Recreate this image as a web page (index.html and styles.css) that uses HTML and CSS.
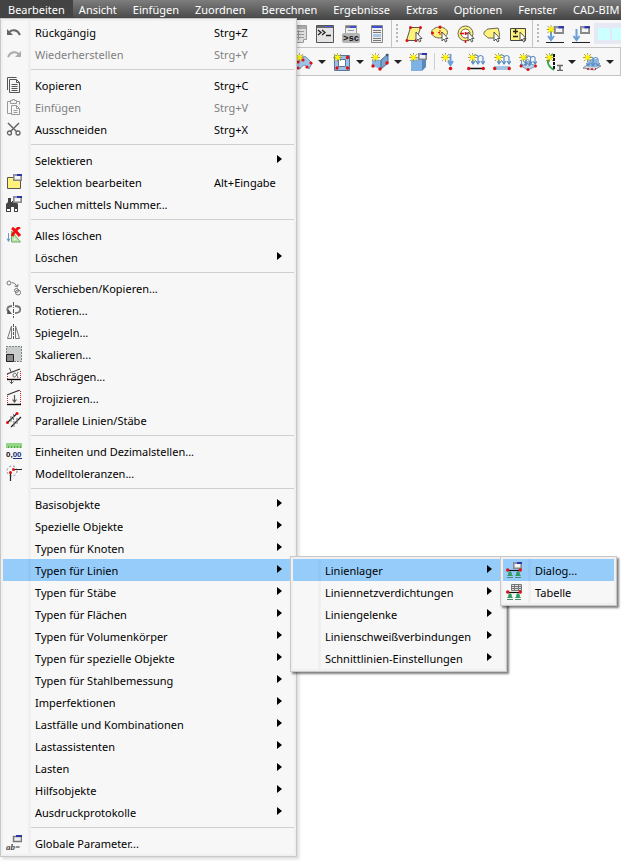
FILE: index.html
```
<!DOCTYPE html>
<html lang="de">
<head>
    <meta charset="UTF-8">
    <title>Bearbeiten</title>
    <link rel="stylesheet" href="styles.css">
</head>
<body>

<svg class="sprite" aria-hidden="true">
    <!-- small building blocks -->
    <symbol id="star" viewBox="0 0 10 10"><path d="M5 0v10M0 5h10M1 1l8 8M9 1l-8 8" stroke="#a3943a"/><path d="M5 1l1 2 3 0-2 2 1 3-3-1-3 1 1-3-2-2 3 0z" fill="#fff200"/></symbol>
    <symbol id="cursor" viewBox="0 0 8 12"><path d="M1 1v9l2-2 1.500 3 1.500-1-1.500-2.500H7z" fill="#fff" stroke="#555"/></symbol>
    <symbol id="win" viewBox="0 0 9 7"><path d="M.8.8h7.400v5.400H.8z" fill="#f4f4f4" stroke="#888" stroke-width="1.6"/><path d="M1 0h8v2H1z" fill="#8d93b8"/><path d="M4 0h5v2H4z" fill="#2a35a8"/></symbol>
    <symbol id="load" viewBox="0 0 14 12"><path d="M2 9V2q2-2 5 0v7M7 3q3-3 5 0v6M0 7l2 3 2-3M5 7l2 3 2-3M10 7l2 3 2-3" fill="none" stroke="#5b8fc4" stroke-width="1.2"/></symbol>

    <!-- menu icons -->
    <symbol id="undo" viewBox="0 0 16 16"><path d="M3.500 8C6 5.500 11 5 14 11" fill="none" stroke="#666" stroke-width="2"/><path d="M1 5v6h6z" fill="#666"/></symbol>
    <symbol id="redo" viewBox="0 0 16 16"><path d="M12.500 8C10 5.500 5 5 2 11" fill="none" stroke="#aaa" stroke-width="2"/><path d="M15 5v6H9z" fill="#aaa"/></symbol>
    <symbol id="copy" viewBox="0 0 16 16"><path d="M1.500 13V.5h9" fill="none" stroke="#555"/><path d="M3.500 2.500h7l3 3v10h-10zM10.500 2.500v3h3M5.500 7.500h6M5.500 9.500h6M5.500 11.500h6M5.500 13.500h6" fill="none" stroke="#555"/></symbol>
    <symbol id="paste" viewBox="0 0 16 16"><path d="M4.500 2.500h-3v12h4M10.500 2.500h3v3M4.500 1.500h2v-1h2v1h2v3h-6zM5.500 6.500h5l3 3v6h-8zM10.500 6.500v3h3M7.500 11.500h4M7.500 13.500h4" fill="none" stroke="#999"/></symbol>
    <symbol id="cut" viewBox="0 0 16 16"><path d="M2 2l9 9M13 2l-9 9" stroke="#666" stroke-width="1.5"/><circle cx="3.5" cy="12" r="2" fill="none" stroke="#666" stroke-width="1.3"/><circle cx="12" cy="12" r="2" fill="none" stroke="#666" stroke-width="1.3"/></symbol>
    <symbol id="selection" viewBox="0 0 16 16"><path d="M1.500 3.500h13v11h-13z" fill="#fff27a" stroke="#555"/><use href="#win" x="7" y="0" width="9" height="7"/></symbol>
    <symbol id="find" viewBox="0 0 16 16"><path d="M2 2h3v4h1V5h2V2h3v5l1 1v8H8v-5H5v5H0V8l2-2z" fill="#444"/><path d="M1 13h3v2H1zM9 13h2v2H9z" fill="#fff"/><use href="#win" x="7" y="0" width="9" height="7"/></symbol>
    <symbol id="delete-all" viewBox="0 0 16 16"><path d="M2.500 6v8M1 11.500l1.500 3 1.500-3" fill="none" stroke="#6a9acc"/><path d="M5.500 4v11h9z" fill="#b9e8a8" stroke="#79a96d"/><path d="M8 11v2h2z" fill="#f7f7f7"/><path d="M6 1c3 2 5 4 8 8M14 0C10 2 8 5 6 9" stroke="#f01010" stroke-width="3" fill="none"/></symbol>
    <symbol id="move" viewBox="0 0 16 16"><g fill="none" stroke="#777"><circle cx="3" cy="3" r="2"/><circle cx="10.5" cy="10.5" r="2"/><circle cx="12" cy="12.5" r="2.5"/><path d="M6 2.500q3 0 5 4M8.500 6l3 1 .5-3"/></g></symbol>
    <symbol id="rotate" viewBox="0 0 16 16"><path d="M7.500 0v16" stroke="#555" stroke-dasharray="4 1 1 1"/><path d="M6 4C1 4 0 8 3 10M9 4c7 0 7 7 0 7" fill="none" stroke="#777" stroke-width="1.8"/><path d="M1 12l1-5 4 5z" fill="#555"/></symbol>
    <symbol id="mirror" viewBox="0 0 16 16"><path d="M7.500 0v16" stroke="#555" stroke-dasharray="3 1"/><path d="M5.500 2v12.500h-4zM9.500 2v12.500h4z" fill="none" stroke="#777"/></symbol>
    <symbol id="scale" viewBox="0 0 16 16"><path d="M.5.5h15v15H.5z" fill="#c9cdcc" stroke="#222" stroke-dasharray="1 2"/><path d="M.5 8.500h7v7h-7z" fill="#8a8a8a" stroke="#222"/></symbol>
    <symbol id="shear" viewBox="0 0 16 16"><path d="M1 6l13-5" stroke="#333" stroke-width="1.2"/><path d="M1 11.500h14" stroke="#111" stroke-width="1.4"/><path d="M1.500 6v5M14.500 3v8" stroke="#e02020" stroke-dasharray="1 1"/><path d="M3.500 0l2 5M5.500 12v4M3.500 13.500l2 2 2-2M12 4c-2 6-5 6-5 3.500S10 3 12 10" fill="none" stroke="#555"/></symbol>
    <symbol id="project" viewBox="0 0 16 16"><path d="M1 5l13-5" stroke="#333" stroke-width="1.2"/><path d="M1 14.500h14" stroke="#111" stroke-width="1.4"/><path d="M1.500 6v8M14.500 1v13" stroke="#e02020" stroke-dasharray="1 1"/><path d="M8.500 5v7M6.500 9.500l2 2.500 2-2.500" fill="none" stroke="#555" stroke-width="1.2"/></symbol>
    <symbol id="parallel" viewBox="0 0 16 16"><path d="M1 11L11 1.500M5 15L15 5" stroke="#222" stroke-width="1.3"/><path d="M5 4v6M7.500 2v6M8 9v6M11 6v6" stroke="#777"/><circle cx="1.5" cy="10.5" r="1.5" fill="#e01010"/><circle cx="11" cy="1.5" r="1.5" fill="#e01010"/></symbol>
    <symbol id="units" viewBox="0 0 16 16"><path d="M0 0h16v5H0z" fill="#93d884"/><path d="M2.500 3v2M5.500 3v2M8.500 3v2M11.500 3v2M14.500 3v2" stroke="#5f9c56"/><text x="0" y="14" font-family="Liberation Sans, sans-serif" font-size="8" font-weight="bold" fill="#111">0,<tspan fill="#20307c">00</tspan></text><path d="M7 15.500h9" stroke="#20307c"/></symbol>
    <symbol id="tolerance" viewBox="0 0 16 16"><circle cx="6" cy="6" r="5" fill="none" stroke="#888" stroke-dasharray="2 2"/><path d="M7 4.500h9M4.500 8v8" stroke="#222" stroke-width="1.2"/><circle cx="7.5" cy="4.5" r="1.5" fill="#e01010"/><circle cx="4.5" cy="7.5" r="1.5" fill="#e01010"/></symbol>
    <symbol id="params" viewBox="0 0 16 16"><path d="M7.500 1.500h8v5h-8z" fill="#eee" stroke="#777" stroke-width="1.5"/><path d="M10 0h6v2h-6z" fill="#2a35a8"/><text x="0" y="15" font-family="Liberation Serif, serif" font-size="9" font-weight="bold" font-style="italic" fill="#444">ab=</text></symbol>
    <symbol id="support" viewBox="0 0 16 16"><path d="M1 8.500h14" stroke="#111" stroke-width="1.2"/><path d="M4 9l2 2-.5 1 1.500 2H1l1.500-2-.5-1zM12 9l2 2-.5 1 1.500 2H9l1.500-2-.5-1z" fill="#2e9a5f"/><path d="M1 15.500h6M9 15.500h6" stroke="#4c8c6a"/><circle cx="1.7" cy="8" r="1.7" fill="#e01010"/><circle cx="14.3" cy="8" r="1.7" fill="#e01010"/></symbol>
    <symbol id="support-dialog" viewBox="0 0 16 16"><use href="#win" x="7" y="0" width="9" height="7"/><use href="#support" width="16" height="16"/></symbol>
    <symbol id="support-table" viewBox="0 0 16 16"><path d="M5.500.5h10v6h-10zM5.500 2.500h10M5.500 4.500h10M8.500.5v6M12.500.5v6" fill="#ddd" stroke="#777"/><use href="#support" width="16" height="16"/></symbol>

    <!-- toolbar icons -->
    <symbol id="table" viewBox="0 0 18 18"><path d="M2.500.5h14v14h-3v3h-9v-3h-2z" fill="#ddd" stroke="#999"/><path d="M2 1h14v3H2z" fill="#aaa"/><path d="M5 6.500h9M5 9.500h9M5 12.500h9M8.500 5v10" stroke="#999"/></symbol>
    <symbol id="console" viewBox="0 0 18 18"><path d="M.5.5h17v17H.5z" fill="#e4e4e4" stroke="#555"/><path d="M1 1h16v2H1z" fill="#667"/><path d="M10 1h6v1h-6z" fill="#4a5ae0"/><path d="M2 5l3 2.500L2 10M6 5l3 2.500L6 10M10 10.500h5" fill="none" stroke="#222" stroke-width="1.3"/></symbol>
    <symbol id="script" viewBox="0 0 18 18"><path d="M3.500.5h11v8h-11z" fill="#eee" stroke="#999"/><path d="M4 1h10v2H4z" fill="#778"/><path d="M8 1h6v2H8z" fill="#3d4fd0"/><path d="M6 5.500h6" stroke="#999"/><rect x="0" y="8" width="18" height="10" rx="2" fill="#b4b4b4"/><text x="1" y="16" font-family="Liberation Mono, monospace" font-size="9" font-weight="bold" fill="#111">&gt;sc</text></symbol>
    <symbol id="doc" viewBox="0 0 18 18"><path d="M3.500.5h11v17h-11z" fill="#eee" stroke="#888"/><path d="M4 1h10v2H4z" fill="#3d4fd0"/><path d="M5 5.500h8M5 7.500h8M5 13.500h8M5 15.500h8" stroke="#777"/><path d="M5 9h8v3H5z" fill="#a9c6e5"/></symbol>
    <symbol id="sel-poly" viewBox="0 0 18 18"><path d="M5.500 2.500h10l-4 13H1.500z" fill="#fff27a" stroke="#555"/><g fill="#e01010"><circle cx="5.5" cy="2.5" r="1.5"/><circle cx="15.5" cy="2.5" r="1.5"/><circle cx="2" cy="15.5" r="1.5"/><circle cx="11" cy="15.5" r="1.5"/></g><use href="#cursor" x="10" y="6" width="8" height="12"/></symbol>
    <symbol id="sel-ellipse" viewBox="0 0 18 18"><ellipse cx="8.5" cy="7.5" rx="8" ry="5.5" fill="#fff27a" stroke="#665"/><path d="M9 2v8M7 7.500h4" stroke="#e01010" stroke-dasharray="2 1"/><circle cx="9" cy="2" r="1.5" fill="#e01010"/><circle cx="1.5" cy="8" r="1.5" fill="#e01010"/><use href="#cursor" x="10" y="6" width="8" height="12"/></symbol>
    <symbol id="sel-circle" viewBox="0 0 18 18"><circle cx="8.5" cy="8.5" r="7.5" fill="#fff27a" stroke="#665"/><circle cx="8.5" cy="8.5" r="4.5" fill="#fff" stroke="#665"/><path d="M3 8.500h4M8 8.500h4M8.500 7v3M8.500 15v3" stroke="#e01010" stroke-width="1.5"/><use href="#cursor" x="10" y="6" width="8" height="12"/></symbol>
    <symbol id="sel-lasso" viewBox="0 0 18 18"><path d="M5 4l10-1c1 3 2 6 1 10H5c-1-2-5-3-4-5 0-1 2-3 4-4z" fill="#fff27a" stroke="#665"/><use href="#cursor" x="10" y="6" width="8" height="12"/></symbol>
    <symbol id="sel-plus" viewBox="0 0 18 18"><path d="M1.500 3.500h15v12h-15z" fill="#fff27a" stroke="#444"/><path d="M4 6.500h5M6.500 4v5M4 11.500h5" stroke="#222" stroke-width="1.3"/><use href="#cursor" x="10" y="6" width="8" height="12"/></symbol>
    <symbol id="load-new" viewBox="0 0 18 18"><path d="M5 5v10M2 11l3 4 3-4" fill="none" stroke="#6a9fd8" stroke-width="2"/><path d="M0 17.500h18" stroke="#222"/><use href="#star" width="10" height="9"/><use href="#win" x="8" y="1" width="10" height="8"/></symbol>
    <symbol id="load-edit" viewBox="0 0 18 18"><path d="M4.500 4v11M1.500 11l3 4 3-4" fill="none" stroke="#6a9fd8" stroke-width="2"/><path d="M0 17.500h18" stroke="#222"/><use href="#win" x="8" y="1" width="10" height="8"/></symbol>
    <symbol id="surface" viewBox="0 0 18 18"><path d="M1 6c5-5 10-3 13 1l3 3-3 6c-3-5-6-5-9 0l-4-2z" fill="#9fc4e8" stroke="#6d8fb2"/><use href="#star" x="0" width="9" height="9"/><g fill="#e01010"><circle cx="3" cy="9" r="1.6"/><circle cx="8" cy="7" r="1.6"/><circle cx="16" cy="10" r="1.6"/><circle cx="12" cy="14" r="1.6"/><circle cx="3" cy="15" r="1.6"/></g></symbol>
    <symbol id="opening" viewBox="0 0 18 18"><path d="M1.500 2.500h15v15h-15z" fill="#9cc1e6" stroke="#55789c"/><path d="M5.500 6.500h7v7h-7z" fill="#fff" stroke="#55789c"/><use href="#star" width="9" height="9"/><g fill="#e01010"><circle cx="14.5" cy="4.5" r="1.7"/><circle cx="14.5" cy="15" r="1.7"/><circle cx="4" cy="15" r="1.7"/></g></symbol>
    <symbol id="solid" viewBox="0 0 18 18"><path d="M1 6l9 1v9l-9-3z" fill="#8ab8e6"/><path d="M10 7l7-6v9l-7 6z" fill="#7aa5d2" stroke="#4a6c90"/><use href="#star" width="9" height="9"/><g fill="#e01010"><circle cx="16" cy="10" r="1.7"/><circle cx="9" cy="16" r="1.7"/><circle cx="2" cy="13" r="1.7"/></g><circle cx="16" cy="2" r="1.3" fill="#357"/></symbol>
    <symbol id="box" viewBox="0 0 18 18"><path d="M2 7h11v11H2z" fill="#7fb2e4"/><path d="M2 7l3-3h12l-4 3z" fill="#b5d5f2"/><path d="M13 7l4-3v10l-4 4z" fill="#5688ba"/><use href="#star" width="9" height="9"/><use href="#win" x="9" y="0" width="9" height="7"/></symbol>
    <symbol id="load-node" viewBox="0 0 18 18"><path d="M9.500 1v9M7 8l2.500 4L12 8" fill="none" stroke="#6a9fd8" stroke-width="2"/><use href="#star" width="9" height="9"/><circle cx="9.5" cy="15.5" r="1.8" fill="#e01010"/></symbol>
    <symbol id="load-line" viewBox="0 0 18 18"><use href="#load" x="4" y="1" width="14" height="12"/><path d="M1 15.500h16" stroke="#111" stroke-width="1.5"/><use href="#star" x="1" width="9" height="9"/><circle cx="1.7" cy="15.5" r="1.7" fill="#e01010"/><circle cx="16.3" cy="15.5" r="1.7" fill="#e01010"/></symbol>
    <symbol id="load-member" viewBox="0 0 18 18"><use href="#load" x="4" y="1" width="14" height="12"/><path d="M1 15h16" stroke="#a3c4e3" stroke-width="4"/><use href="#star" x="1" width="9" height="9"/><circle cx="1.7" cy="15.5" r="1.7" fill="#e01010"/><circle cx="16.3" cy="15.5" r="1.7" fill="#e01010"/></symbol>
    <symbol id="load-surface" viewBox="0 0 18 18"><path d="M2 13l8-3 7 3-8 4z" fill="#b9d4ee" stroke="#7795b3"/><use href="#load" x="1" y="5" width="11" height="10"/><use href="#load" x="5" y="2" width="13" height="11"/><use href="#star" width="9" height="9"/><g fill="#e01010"><circle cx="2" cy="13" r="1.5"/><circle cx="16.5" cy="13" r="1.5"/><circle cx="9" cy="16.5" r="1.5"/></g></symbol>
    <symbol id="imperfection" viewBox="0 0 18 18"><path d="M9 1v15" stroke="#111" stroke-width="2" stroke-dasharray="3 1"/><path d="M8 1C1 6 1 12 9 17" fill="none" stroke="#2fa04a" stroke-width="1.8"/><use href="#star" width="9" height="9"/><path d="M12 12.500h6M12 17.500h6M15 12v6" stroke="#666" stroke-width="1.5"/></symbol>
    <symbol id="load-free" viewBox="0 0 18 18"><path d="M0 15l7-5 11 3-7 4z" fill="#d2dae2" stroke="#889"/><path d="M6 6h8v8H6z" fill="#8db5de"/><use href="#load" x="3" y="3" width="14" height="12"/><use href="#star" width="9" height="9"/><path d="M4 16h9" stroke="#e01010" stroke-width="1.5" stroke-dasharray="2 2"/></symbol>
</svg>

<nav>
    <ul class="menubar">
        <li class="open"><button>Bearbeiten</button>
            <ul class="menu">
                <li><button><svg class="icon"><use href="#undo"/></svg><span>Rückgängig</span><kbd>Strg+Z</kbd></button></li>
                <li><button disabled><svg class="icon"><use href="#redo"/></svg><span>Wiederherstellen</span><kbd>Strg+Y</kbd></button></li>
                <li class="line"></li>
                <li><button><svg class="icon"><use href="#copy"/></svg><span>Kopieren</span><kbd>Strg+C</kbd></button></li>
                <li><button disabled><svg class="icon"><use href="#paste"/></svg><span>Einfügen</span><kbd>Strg+V</kbd></button></li>
                <li><button><svg class="icon"><use href="#cut"/></svg><span>Ausschneiden</span><kbd>Strg+X</kbd></button></li>
                <li class="line"></li>
                <li><button class="more"><span>Selektieren</span></button></li>
                <li><button><svg class="icon"><use href="#selection"/></svg><span>Selektion bearbeiten</span><kbd>Alt+Eingabe</kbd></button></li>
                <li><button><svg class="icon"><use href="#find"/></svg><span>Suchen mittels Nummer...</span></button></li>
                <li class="line"></li>
                <li><button><svg class="icon"><use href="#delete-all"/></svg><span>Alles löschen</span></button></li>
                <li><button class="more"><span>Löschen</span></button></li>
                <li class="line"></li>
                <li><button><svg class="icon"><use href="#move"/></svg><span>Verschieben/Kopieren...</span></button></li>
                <li><button><svg class="icon"><use href="#rotate"/></svg><span>Rotieren...</span></button></li>
                <li><button><svg class="icon"><use href="#mirror"/></svg><span>Spiegeln...</span></button></li>
                <li><button><svg class="icon"><use href="#scale"/></svg><span>Skalieren...</span></button></li>
                <li><button><svg class="icon"><use href="#shear"/></svg><span>Abschrägen...</span></button></li>
                <li><button><svg class="icon"><use href="#project"/></svg><span>Projizieren...</span></button></li>
                <li><button><svg class="icon"><use href="#parallel"/></svg><span>Parallele Linien/Stäbe</span></button></li>
                <li class="line"></li>
                <li><button><svg class="icon"><use href="#units"/></svg><span>Einheiten und Dezimalstellen...</span></button></li>
                <li><button><svg class="icon"><use href="#tolerance"/></svg><span>Modelltoleranzen...</span></button></li>
                <li class="line"></li>
                <li><button class="more"><span>Basisobjekte</span></button></li>
                <li><button class="more"><span>Spezielle Objekte</span></button></li>
                <li><button class="more"><span>Typen für Knoten</span></button></li>
                <li class="active"><button class="more"><span>Typen für Linien</span></button>
                    <ul class="menu types">
                        <li class="active"><button class="more"><span>Linienlager</span></button>
                            <ul class="menu views">
                                <li class="active"><button><svg class="icon"><use href="#support-dialog"/></svg><span>Dialog...</span></button></li>
                                <li><button><svg class="icon"><use href="#support-table"/></svg><span>Tabelle</span></button></li>
                            </ul>
                        </li>
                        <li><button class="more"><span>Liniennetzverdichtungen</span></button></li>
                        <li><button class="more"><span>Liniengelenke</span></button></li>
                        <li><button class="more"><span>Linienschweißverbindungen</span></button></li>
                        <li><button class="more"><span>Schnittlinien-Einstellungen</span></button></li>
                    </ul>
                </li>
                <li><button class="more"><span>Typen für Stäbe</span></button></li>
                <li><button class="more"><span>Typen für Flächen</span></button></li>
                <li><button class="more"><span>Typen für Volumenkörper</span></button></li>
                <li><button class="more"><span>Typen für spezielle Objekte</span></button></li>
                <li><button class="more"><span>Typen für Stahlbemessung</span></button></li>
                <li><button class="more"><span>Imperfektionen</span></button></li>
                <li><button class="more"><span>Lastfälle und Kombinationen</span></button></li>
                <li><button class="more"><span>Lastassistenten</span></button></li>
                <li><button class="more"><span>Lasten</span></button></li>
                <li><button class="more"><span>Hilfsobjekte</span></button></li>
                <li><button class="more"><span>Ausdruckprotokolle</span></button></li>
                <li class="line"></li>
                <li><button><svg class="icon"><use href="#params"/></svg><span>Globale Parameter...</span></button></li>
            </ul>
        </li>
        <li><button>Ansicht</button></li>
        <li><button>Einfügen</button></li>
        <li><button>Zuordnen</button></li>
        <li><button>Berechnen</button></li>
        <li><button>Ergebnisse</button></li>
        <li><button>Extras</button></li>
        <li><button>Optionen</button></li>
        <li><button>Fenster</button></li>
        <li><button>CAD-BIM</button></li>
    </ul>
</nav>

<div class="toolbar">
    <div class="group">
        <button aria-label="Tabellen"><svg><use href="#table"/></svg></button>
        <button aria-label="Konsole"><svg><use href="#console"/></svg></button>
        <button aria-label="Skript"><svg><use href="#script"/></svg></button>
        <button aria-label="Protokoll"><svg><use href="#doc"/></svg></button>
    </div>
    <div class="group grip">
        <button aria-label="Auswahl Rhomboid"><svg><use href="#sel-poly"/></svg></button>
        <button aria-label="Auswahl Ellipse"><svg><use href="#sel-ellipse"/></svg></button>
        <button aria-label="Auswahl Kreisring"><svg><use href="#sel-circle"/></svg></button>
        <button aria-label="Auswahl Lasso"><svg><use href="#sel-lasso"/></svg></button>
        <button aria-label="Auswahl erweitern"><svg><use href="#sel-plus"/></svg></button>
    </div>
    <div class="group grip">
        <button aria-label="Neuer Lastfall"><svg><use href="#load-new"/></svg></button>
        <button aria-label="Lastfall bearbeiten"><svg><use href="#load-edit"/></svg></button>
    </div>
    <div class="swatches"><i></i><i></i></div>
</div>

<div class="toolbar second">
    <button class="drop" aria-label="Fläche"><svg><use href="#surface"/></svg></button>
    <button class="drop" aria-label="Öffnung"><svg><use href="#opening"/></svg></button>
    <button class="drop" aria-label="Volumenkörper"><svg><use href="#solid"/></svg></button>
    <button aria-label="Block"><svg><use href="#box"/></svg></button>
    <span class="divider"></span>
    <button aria-label="Knotenlast"><svg><use href="#load-node"/></svg></button>
    <button aria-label="Linienlast"><svg><use href="#load-line"/></svg></button>
    <button aria-label="Stablast"><svg><use href="#load-member"/></svg></button>
    <button aria-label="Flächenlast"><svg><use href="#load-surface"/></svg></button>
    <button class="drop" aria-label="Imperfektion"><svg><use href="#imperfection"/></svg></button>
    <button class="drop" aria-label="Freie Last"><svg><use href="#load-free"/></svg></button>
</div>

</body>
</html>
```
FILE: styles.css
```
* {
    box-sizing: border-box;
}
body {
    margin: 0;
    min-height: 100vh;
    background: #fff;
    font-family: "Noto Sans", "Open Sans", sans-serif;
    font-size: 11px;
    color: #000;
}
ul {
    list-style: none;
    margin: 0;
    padding: 0;
}
button {
    border: 0;
    margin: 0;
    padding: 0;
    background: none;
    font: inherit;
    color: inherit;
}
.sprite {
    display: none;
}

/* Menu bar */
.menubar {
    display: flex;
    height: 20px;
    background: linear-gradient(#7d7d7d, #444);
}
.menubar > li {
    position: relative;
}
.menubar > li > button {
    height: 20px;
    padding: 0 8px 2px;
    color: #fff;
    white-space: nowrap;
}
.menubar > li.open {
    margin-right: -2px;
    background: #434343;
}

/* Drop-down menus */
.menu {
    position: absolute;
    top: 18px;
    left: 0;
    z-index: 1;
    width: 297px;
    padding: 2px;
    border: 1px solid #c8c8c8;
    background: #f0f0f0;
    box-shadow: 2px 2px 3px rgba(0, 0, 0, 0.15);
}
.menu .menu {
    top: -3px;
    left: calc(100% - 4px);
    box-shadow: 2px 2px 2px rgba(0, 0, 0, 0.5);
}
.menu .types {
    width: 217px;
}
.menu .views {
    width: 117px;
}
.menu li {
    position: relative;
    background: linear-gradient(to right, #f7f7f7 25px, #f0f0f0 25px, #f0f0f0 28px, #f7f7f7 28px);
}
.menu li.active {
    background: linear-gradient(to right, #95ccfa 25px, #8fc6f4 25px, #8fc6f4 28px, #95ccfa 28px);
}
.menu button {
    display: grid;
    grid-template-columns: 29px 1fr auto;
    align-items: center;
    width: 100%;
    height: 22px;
    padding-left: 3px;
    text-align: left;
    white-space: nowrap;
}
.menu button:disabled {
    color: #808080;
}
.menu span {
    grid-column: 2;
}
.menu kbd {
    width: 80px;
    font: inherit;
}
.menu .icon {
    width: 16px;
    height: 16px;
    overflow: visible;
}
.more::after {
    content: "";
    width: 5px;
    height: 8px;
    margin-right: 12px;
    margin-bottom: 2px;
    background: #000;
    clip-path: polygon(0 0, 100% 50%, 0 100%);
}
.menu .line {
    height: 9px;
    padding: 4px 0 0 28px;
}
.line::before {
    content: "";
    display: block;
    height: 1px;
    background: #d0d0d0;
}

/* Toolbars */
.toolbar {
    display: flex;
    height: 28px;
    padding-left: 286px;
    background: #f7f7f7;
    border-bottom: 1px solid #c4c4c4;
}
.toolbar.second {
    padding-left: 291px;
    border-right: 1px solid #c4c4c4;
}
.toolbar button {
    display: flex;
    flex: none;
    align-items: center;
    justify-content: center;
    width: 26px;
    height: 27px;
}
.toolbar svg {
    flex: none;
    width: 18px;
    height: 18px;
}
.group {
    display: flex;
    flex: none;
    padding-right: 1px;
    border-right: 1px solid #c4c4c4;
}
.group:nth-child(3) {
    border: 0;
    padding: 0;
}
.grip::before {
    content: "";
    width: 2px;
    margin: 4px 3px 4px 4px;
    background: repeating-linear-gradient(#b8b8b8 0 2px, transparent 2px 4px);
}
.toolbar .drop {
    width: 38px;
    justify-content: flex-start;
    gap: 5px;
    padding-left: 4px;
}
.drop::after {
    content: "";
    border: 4px solid transparent;
    border-top-color: #222;
    border-bottom: 0;
}
.divider {
    width: 1px;
    margin: 5px 2px 5px 3px;
    background: #d0d0d0;
}
.swatches {
    display: flex;
    flex: 1;
    align-items: center;
    gap: 2px;
    margin: 3px 0;
    padding-left: 4px;
    background: #e6e8f3;
    overflow: hidden;
}
.swatches i {
    flex: none;
    width: 12px;
    height: 12px;
    background: #ccffff;
}
```
